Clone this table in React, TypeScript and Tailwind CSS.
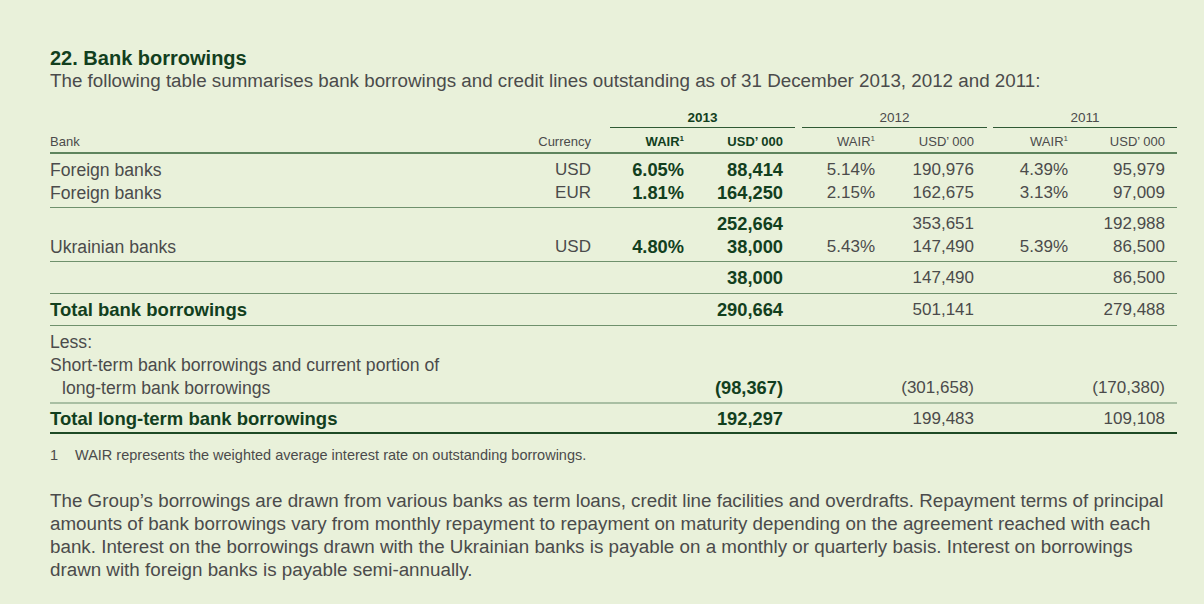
import React from "react";

const font = { fontFamily: '"Liberation Sans", Arial, sans-serif' };

type Row = {
  label?: React.ReactNode;
  cur?: string;
  w13?: string;
  u13?: string;
  w12?: string;
  u12?: string;
  w11?: string;
  u11?: string;
  bold?: boolean;
};

const grid = "grid grid-cols-[441px_100px_93px_99px_92px_99px_94px_97px_12px]";

function DataRow({ r }: { r: Row }) {
  const lab = r.bold
    ? "text-[18.5px] font-bold text-[#123f1e]"
    : "text-[17.6px] text-[#4b4b4b]";
  return (
    <div className={`${grid} h-[23px] pt-[1px] items-center leading-[22px]`}>
      <div className={`${lab} whitespace-nowrap`}>{r.label}</div>
      <div className="text-right text-[17px] text-[#4b4b4b]">{r.cur}</div>
      <div className="text-right text-[18.3px] font-bold text-[#123f1e]">{r.w13}</div>
      <div className="text-right text-[18.3px] font-bold text-[#123f1e]">{r.u13}</div>
      <div className="text-right text-[17px] text-[#4b4b4b]">{r.w12}</div>
      <div className="text-right text-[17px] text-[#4b4b4b]">{r.u12}</div>
      <div className="text-right text-[17px] text-[#4b4b4b]">{r.w11}</div>
      <div className="text-right text-[17px] text-[#4b4b4b]">{r.u11}</div>
      <div />
    </div>
  );
}

function Group({ rows, cls }: { rows: Row[]; cls: string }) {
  return (
    <div className={cls}>
      {rows.map((r, i) => (
        <DataRow key={i} r={r} />
      ))}
    </div>
  );
}

const Wair = ({ bold }: { bold?: boolean }) => (
  <span className={bold ? "font-bold text-[#123f1e]" : ""}>
    WAIR<sup className="text-[8px] top-[-5px]">1</sup>
  </span>
);

export default function App() {
  return (
    <div className="min-h-[604px] w-[1204px] bg-[#e9f1da] pt-[47px] pl-[50px]" style={font}>
      <div className="w-[1127px]">
        <h1 className="text-[20px] font-bold leading-[23px] text-[#123f1e]">22. Bank borrowings</h1>
        <p className="text-[18.8px] leading-[22px] text-[#4b4b4b] whitespace-nowrap">
          The following table summarises bank borrowings and credit lines outstanding as of 31 December 2013, 2012 and 2011:
        </p>

        {/* Year headers */}
        <div className="mt-[16px] flex">
          <div className="w-[560px]" />
          <div className="w-[185px] border-b-[1.5px] border-[#2f5a34] text-center text-[13.5px] font-bold leading-[19px] text-[#123f1e]">
            2013
          </div>
          <div className="w-[7px]" />
          <div className="w-[185px] border-b-[1.5px] border-[#2f5a34] text-center text-[13.5px] leading-[19px] text-[#4b4b4b]">
            2012
          </div>
          <div className="w-[6px]" />
          <div className="w-[184px] border-b-[1.5px] border-[#2f5a34] text-center text-[13.5px] leading-[19px] text-[#4b4b4b]">
            2011
          </div>
        </div>

        {/* Column headers */}
        <div className={`${grid} h-[26px] pt-[3px] items-center border-b-2 border-[#5e845d] text-[13px] text-[#4b4b4b]`}>
          <div>Bank</div>
          <div className="text-right">Currency</div>
          <div className="text-right"><Wair bold /></div>
          <div className="text-right font-bold text-[#123f1e]">USD’ 000</div>
          <div className="text-right"><Wair /></div>
          <div className="text-right">USD’ 000</div>
          <div className="text-right"><Wair /></div>
          <div className="text-right">USD’ 000</div>
          <div />
        </div>

        <Group
          cls="pt-[4px] pb-[3px] border-b border-[#6f916c]"
          rows={[
            { label: "Foreign banks", cur: "USD", w13: "6.05%", u13: "88,414", w12: "5.14%", u12: "190,976", w11: "4.39%", u11: "95,979" },
            { label: "Foreign banks", cur: "EUR", w13: "1.81%", u13: "164,250", w12: "2.15%", u12: "162,675", w11: "3.13%", u11: "97,009" },
          ]}
        />
        <Group
          cls="pt-[4px] pb-[3px] border-b border-[#6f916c]"
          rows={[
            { u13: "252,664", u12: "353,651", u11: "192,988" },
            { label: "Ukrainian banks", cur: "USD", w13: "4.80%", u13: "38,000", w12: "5.43%", u12: "147,490", w11: "5.39%", u11: "86,500" },
          ]}
        />
        <Group
          cls="pt-[4px] pb-[4px] border-b border-[#6f916c]"
          rows={[{ u13: "38,000", u12: "147,490", u11: "86,500" }]}
        />
        <Group
          cls="pt-[4px] pb-[4px] border-b border-[#6f916c]"
          rows={[{ label: "Total bank borrowings", bold: true, u13: "290,664", u12: "501,141", u11: "279,488" }]}
        />
        <Group
          cls="pt-[4px] pb-[3px] border-b-2 border-[#a9bfa3]"
          rows={[
            { label: "Less:" },
            { label: "Short-term bank borrowings and current portion of" },
            { label: <span className="pl-[12px]">long-term bank borrowings</span>, u13: "(98,367)", u12: "(301,658)", u11: "(170,380)" },
          ]}
        />
        <Group
          cls="pt-[3px] pb-[2px] border-b-[2.5px] border-[#1e4a25]"
          rows={[{ label: "Total long-term bank borrowings", bold: true, u13: "192,297", u12: "199,483", u11: "109,108" }]}
        />

        <div className="mt-[13px] flex text-[14.5px] leading-[17px] text-[#4b4b4b]">
          <span className="w-[25px]">1</span>
          <span className="whitespace-nowrap">WAIR represents the weighted average interest rate on outstanding borrowings.</span>
        </div>

        <p className="mt-[25px] text-[18.8px] leading-[23px] text-[#4b4b4b] whitespace-nowrap">
          The Group’s borrowings are drawn from various banks as term loans, credit line facilities and overdrafts. Repayment terms of principal
          <br />
          amounts of bank borrowings vary from monthly repayment to repayment on maturity depending on the agreement reached with each
          <br />
          bank. Interest on the borrowings drawn with the Ukrainian banks is payable on a monthly or quarterly basis. Interest on borrowings
          <br />
          drawn with foreign banks is payable semi-annually.
        </p>
      </div>
    </div>
  );
}
